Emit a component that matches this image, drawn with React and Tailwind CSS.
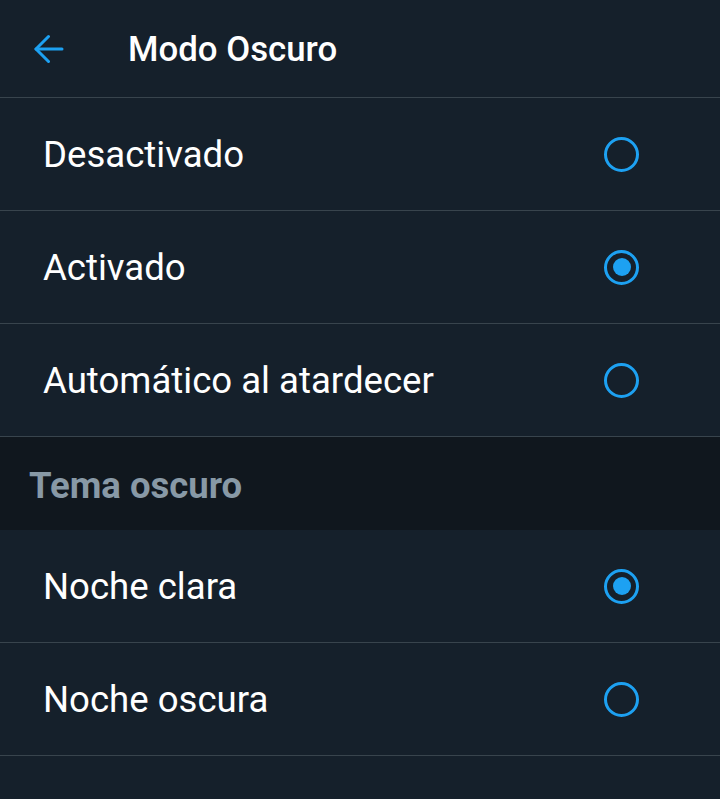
import React from "react";

function Radio({ checked }) {
  return (
    <div className="w-[35px] h-[35px] rounded-full border-[3px] border-[#1da1f2] flex items-center justify-center shrink-0">
      {checked && <div className="w-[18px] h-[18px] rounded-full bg-[#1da1f2]" />}
    </div>
  );
}

function Row({ label, checked }) {
  return (
    <div className="h-[113px] flex items-center justify-between pl-[43px] pr-[81px] border-b border-[#38444d]">
      <span className="text-[36.6px] text-white leading-none pt-[2px]">{label}</span>
      <Radio checked={checked} />
    </div>
  );
}

export default function App() {
  return (
    <div className="w-[720px] h-[799px] bg-[#15202b] overflow-hidden" style={{ fontFamily: "Roboto, 'Noto Sans', sans-serif" }}>
      <div className="h-[98px] flex items-center border-b border-[#38444d]">
        <div className="w-[128px] pl-[34px] flex items-center">
          <svg width="30" height="30" viewBox="0 0 30 30" fill="none" stroke="#1da1f2" strokeWidth="3" strokeLinecap="round" strokeLinejoin="round">
            <path d="M28 15H2" />
            <path d="M14.5 2.5L2 15l12.5 12.5" />
          </svg>
        </div>
        <span className="text-[34.8px] font-medium text-white leading-none pt-[2px]">Modo Oscuro</span>
      </div>
      <Row label="Desactivado" />
      <Row label="Activado" checked />
      <Row label="Automático al atardecer" />
      <div className="h-[93px] bg-[#10171e] flex items-center pl-[29px]">
        <span className="text-[36.5px] font-bold text-[#8899a6] leading-none pt-[5px]">Tema oscuro</span>
      </div>
      <Row label="Noche clara" checked />
      <Row label="Noche oscura" />
    </div>
  );
}
